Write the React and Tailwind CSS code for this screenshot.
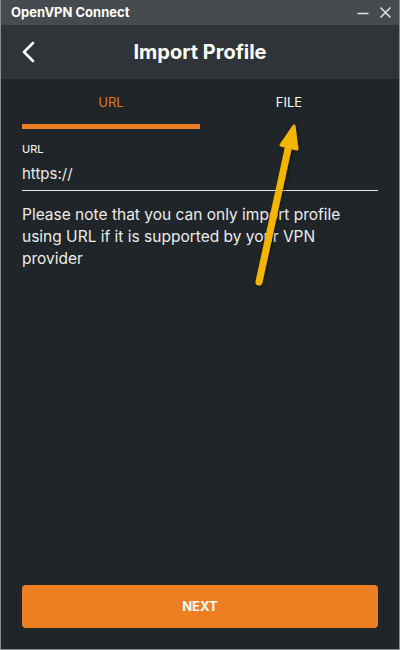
import React, { useState } from 'react';

function Arrow() {
  return (
    <svg className="absolute left-0 top-0 pointer-events-none" width="400" height="650" viewBox="0 0 400 650">
      <defs>
        <filter id="sh" x="-50%" y="-50%" width="200%" height="200%">
          <feDropShadow dx="1" dy="1" stdDeviation="1.5" floodColor="#000" floodOpacity="0.5" />
        </filter>
      </defs>
      <g filter="url(#sh)" stroke="#f5b400" fill="#f5b400" strokeLinecap="round" strokeLinejoin="round">
        <line x1="258" y1="282" x2="289" y2="140" strokeWidth="7" />
        <polygon points="293,126 280,145 296,149" strokeWidth="3" />
      </g>
    </svg>
  );
}

export default function App() {
  const [tab, setTab] = useState('url');
  const [url, setUrl] = useState('https://');

  return (
    <div className="relative w-[400px] h-[650px] flex flex-col bg-[#1f2528] border-x border-b border-[#8a8d8f] font-['Inter',sans-serif] overflow-hidden">
      <div className="h-[25px] shrink-0 bg-[#454b4e] flex items-center justify-between pl-[10px] pr-[7px]">
        <span className="text-[13px] font-bold text-white">OpenVPN Connect</span>
        <div className="flex items-center gap-[10px] text-[#e4e4e4]">
          <svg width="12" height="12" viewBox="0 0 12 12"><path d="M0.5 6.5h11" stroke="currentColor" strokeWidth="1.5" /></svg>
          <svg width="13" height="13" viewBox="0 0 13 13"><path d="M1.5 1.5l10 10M11.5 1.5l-10 10" stroke="currentColor" strokeWidth="1.5" /></svg>
        </div>
      </div>

      <div className="h-[54px] shrink-0 bg-[#2e3437] flex items-center relative">
        <button className="absolute left-[20px] top-[16px] text-white">
          <svg width="16" height="22" viewBox="0 0 16 22"><path d="M12 2L3 11l9 9" fill="none" stroke="currentColor" strokeWidth="2.6" strokeLinecap="round" strokeLinejoin="round" /></svg>
        </button>
        <h1 className="w-full text-center text-[20px] font-bold text-white">Import Profile</h1>
      </div>

      <div className="flex-1 flex flex-col px-[21px]">
        <div className="flex">
          <button onClick={() => setTab('url')} className="w-[178px] flex flex-col items-center">
            <span className={`pt-[14px] text-[13px] ${tab === 'url' ? 'text-[#e07a22]' : 'text-white'}`}>URL</span>
            <span className={`mt-[11px] w-full h-[5px] ${tab === 'url' ? 'bg-[#ed7e22]' : 'bg-transparent'}`} />
          </button>
          <button onClick={() => setTab('file')} className="flex-1 flex flex-col items-center">
            <span className={`pt-[14px] text-[13px] ${tab === 'file' ? 'text-[#e07a22]' : 'text-white'}`}>FILE</span>
            <span className={`mt-[11px] w-full h-[5px] ${tab === 'file' ? 'bg-[#ed7e22]' : 'bg-transparent'}`} />
          </button>
        </div>

        <label className="mt-[15px] text-[11px] text-white leading-none">URL</label>
        <input
          autoFocus
          value={url}
          onChange={e => setUrl(e.target.value)}
          className="mt-[8px] pb-[5px] w-full bg-transparent border-b border-[#e6e6e6] text-[15px] text-[#e8e8e8] caret-white outline-none"
        />

        <p className="mt-[13px] text-[15.5px] leading-[22px] text-[#ececec]">
          Please note that you can only import profile using URL if it is supported by your VPN provider
        </p>

        <button className="mt-auto mb-[21px] h-[43px] w-full rounded-[4px] bg-[#ed7f22] text-white text-[13px] font-bold">
          NEXT
        </button>
      </div>

      <Arrow />
    </div>
  );
}
